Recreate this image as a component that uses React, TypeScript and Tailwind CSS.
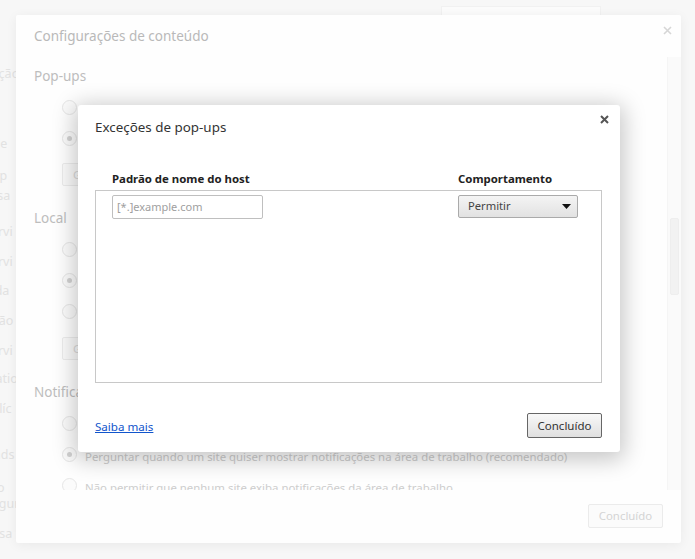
import React from "react";

const font = { fontFamily: '"Noto Sans", "Open Sans", sans-serif' };

const Radio = ({ checked = false }: { checked?: boolean }) => (
  <span className="w-[15px] h-[15px] rounded-full border border-[#e6e6e6] bg-[#fbfbfb] flex items-center justify-center shrink-0">
    {checked && <span className="w-[5px] h-[5px] rounded-full bg-[#d2d2d2]" />}
  </span>
);

const RadioRow = ({ checked, label }: { checked?: boolean; label?: string }) => (
  <div className="h-[31px] flex items-center gap-[8px]">
    <Radio checked={checked} />
    {label && (
      <span className="mt-[4px] text-[11.4px] text-[#cdcdcd] whitespace-nowrap">
        {label}
      </span>
    )}
  </div>
);

const FadedButton = ({ className }: { className: string }) => (
  <div
    className={`${className} h-[23px] w-[130px] border border-[#ececec] rounded-[2px] bg-[#fafafa] text-[11.4px] text-[#d8d8d8] pl-[10px] leading-[21px] whitespace-nowrap overflow-hidden`}
  >
    Gerenciar exceções...
  </div>
);

const backdropLines = [
  ["Navegação", 66, -46],
  ["Senha de", 136, -47],
  ["Ative p", 168, -33],
  ["Desa", 188, -19],
  ["Servi", 224, -16],
  ["Servi", 254, -16],
  ["Enda", 283, -20],
  ["Tradução", 313, -41],
  ["Servi", 343, -16],
  ["Automatio", 371, -44],
  ["Políc", 401, -16],
  ["Downloads", 447, -51],
  ["Local do arquivo", 480, -92],
  ["Configur", 496, -32],
  ["Pesquisa", 526, -40],
] as const;

const App = () => {
  return (
    <div
      className="relative w-[695px] h-[559px] overflow-hidden bg-[#f7f7f7]"
      style={font}
    >
      {/* page behind the overlay */}
      <div className="absolute inset-0">
        {backdropLines.map(([t, y, x], i) => (
          <div
            key={i}
            className="absolute text-[12.5px] leading-[16px] text-[#e2e2e2] whitespace-nowrap"
            style={{ top: y, left: x }}
          >
            {t}
          </div>
        ))}
        <div className="absolute left-[441px] top-[6px] w-[160px] h-[12px] border border-[#f1f1f1] bg-[#fbfbfb]" />
      </div>

      {/* Configurações de conteúdo */}
      <div className="absolute left-[16px] top-[15px] w-[665px] h-[528px] bg-[#fefefe] rounded-[2px] shadow-[0_2px_12px_rgba(0,0,0,0.06)] flex flex-col">
        <div className="h-[42px] pl-[18px] pt-[10px] relative">
          <h1 className="text-[13.5px] leading-[22px] text-[#b9b9b9]">
            Configurações de conteúdo
          </h1>
          <svg
            className="absolute right-[9px] top-[11px]"
            width="9"
            height="9"
            viewBox="0 0 9 9"
          >
            <path d="M1 1L8 8M8 1L1 8" stroke="#d6d6d6" strokeWidth="1.6" />
          </svg>
        </div>

        <div className="h-[433px] flex overflow-hidden">
          <div className="flex-1 pl-[18px]">
            <h3 className="mt-[9px] text-[13.5px] leading-[20px] text-[#bdbdbd]">Pop-ups</h3>
            <div className="pl-[28px] mt-[6px]">
              <RadioRow />
              <RadioRow checked />
              <FadedButton className="mt-[9px]" />
            </div>
            <h3 className="mt-[22px] text-[13.5px] leading-[20px] text-[#bdbdbd]">Local</h3>
            <div className="pl-[28px] mt-[6px]">
              <RadioRow />
              <RadioRow checked />
              <RadioRow />
              <FadedButton className="mt-[10px]" />
            </div>
            <h3 className="mt-[22px] text-[13.5px] leading-[20px] text-[#bdbdbd]">
              Notificações
            </h3>
            <div className="pl-[28px] mt-[6px]">
              <RadioRow label="Permitir que todos os sites mostrem notificações da área de trabalho" />
              <RadioRow
                checked
                label="Perguntar quando um site quiser mostrar notificações na área de trabalho (recomendado)"
              />
              <RadioRow label="Não permitir que nenhum site exiba notificações da área de trabalho" />
            </div>
          </div>
          {/* scrollbar */}
          <div className="w-[14px] bg-[#fafafa] border-l border-[#f5f5f5] pt-[161px] pl-[2px]">
            <div className="w-[9px] h-[77px] rounded-[2px] bg-[#f2f2f2] border border-[#eeeeee]" />
          </div>
        </div>

        <div className="flex-1 flex justify-end items-start pt-[14px] pr-[18px]">
          <button className="w-[75px] h-[24px] border border-[#ebebeb] rounded-[2px] bg-[#fbfbfb] text-[11.4px] text-[#d4d4d4]">
            Concluído
          </button>
        </div>
      </div>

      {/* Exceções de pop-ups */}
      <div className="absolute left-[78px] top-[105px] w-[542px] h-[347px] bg-white rounded-[3px] shadow-[0_4px_22px_4px_rgba(0,0,0,0.22)] flex flex-col">
        <div className="relative h-[44px] pl-[17px] pt-[11px]">
          <h2 className="text-[13.4px] leading-[22px] text-[#333]">Exceções de pop-ups</h2>
          <svg
            className="absolute right-[11px] top-[10px]"
            width="9"
            height="9"
            viewBox="0 0 9 9"
          >
            <path d="M1 1L8 8M8 1L1 8" stroke="#555" strokeWidth="2" />
          </svg>
        </div>

        <div className="px-[17px] pr-[18px]">
          <div className="flex h-[41px] items-end pb-[3px] text-[11.4px] font-bold text-[#222]">
            <span className="pl-[17px] w-[363px]">Padrão de nome do host</span>
            <span>Comportamento</span>
          </div>
          <div className="h-[193px] border border-[#c8c8c8] pt-[4px]">
            <div className="flex items-start">
              <div className="ml-[16px] w-[151px] h-[24px] border border-[#bfbfbf] rounded-[2px] text-[11px] text-[#a0a0a0] leading-[22px] pl-[4px]">
                [*.]example.com
              </div>
              <div className="ml-[195px] w-[120px] h-[23px] border border-[#aaaaaa] rounded-[2px] bg-gradient-to-b from-[#f4f4f4] to-[#e2e2e2] flex items-center justify-between pl-[9px] pr-[6px]">
                <span className="text-[11.2px] text-[#444]">Permitir</span>
                <svg width="9" height="5" viewBox="0 0 9 5">
                  <path d="M0 0H9L4.5 5Z" fill="#111" />
                </svg>
              </div>
            </div>
          </div>
        </div>

        <div className="flex-1 flex items-start justify-between pl-[17px] pr-[18px] pt-[30px]">
          <a href="#" className="mt-[5px] text-[11.6px] text-[#1155cc] underline">
            Saiba mais
          </a>
          <button className="w-[75px] h-[25px] border border-[#666] rounded-[2px] bg-gradient-to-b from-[#f8f8f8] to-[#e0e0e0] text-[11.5px] text-[#333]">
            Concluído
          </button>
        </div>
      </div>
    </div>
  );
};

export default App;
